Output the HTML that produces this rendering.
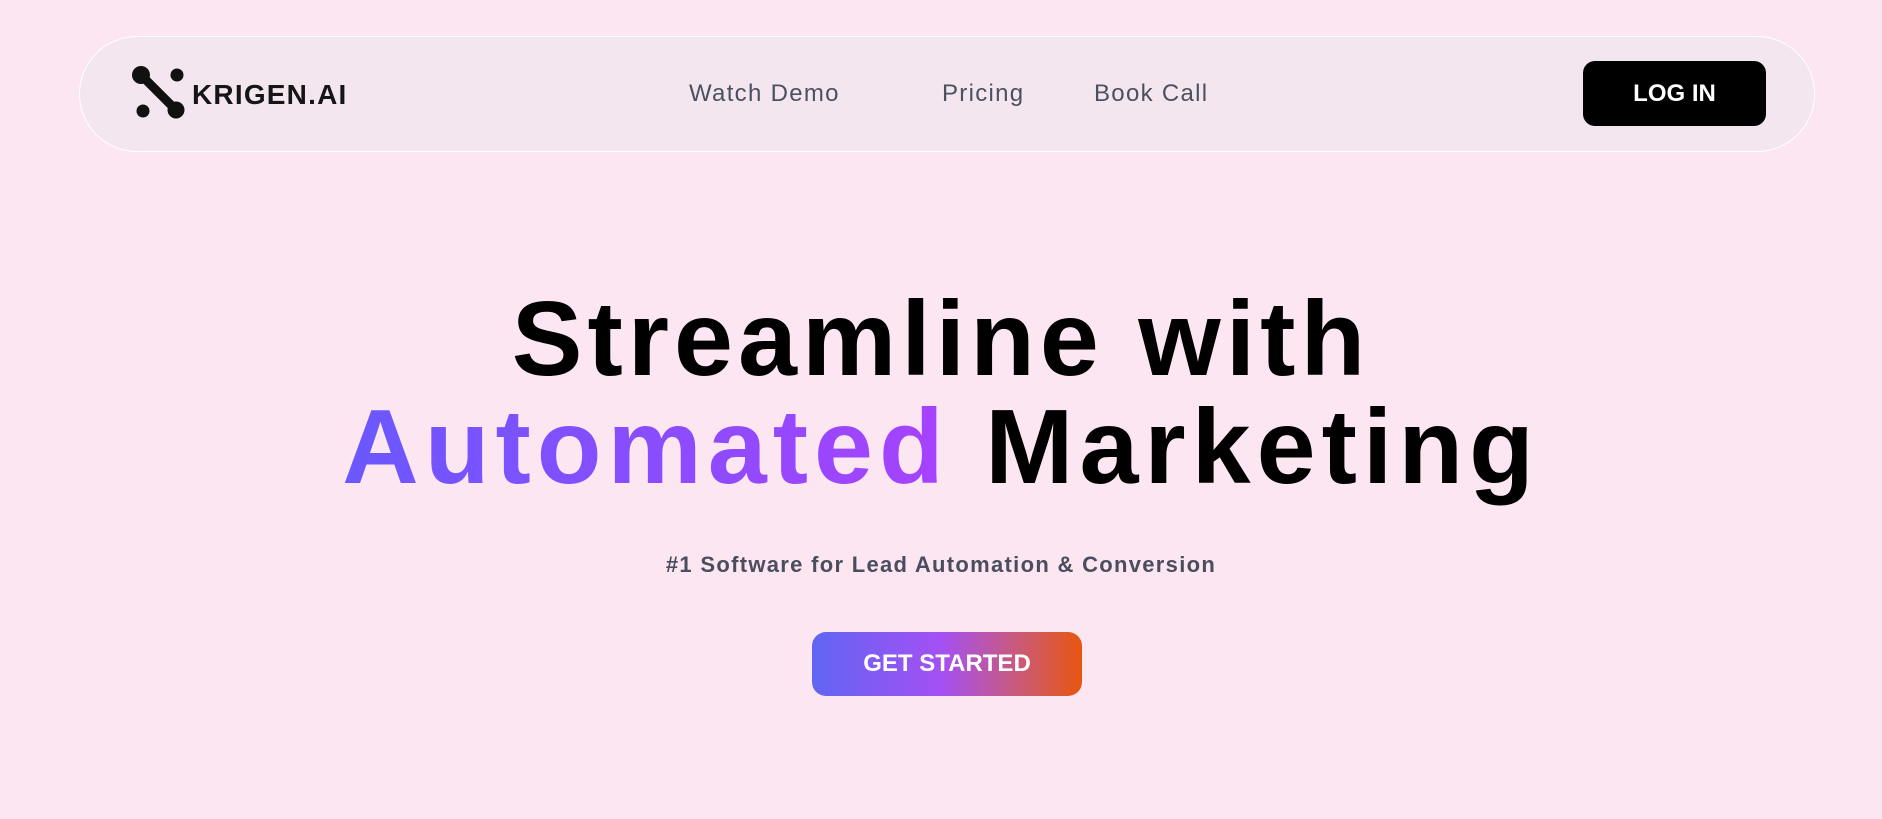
<!DOCTYPE html>
<html><head><meta charset="utf-8"><style>
html,body{margin:0;padding:0;width:1882px;height:819px;overflow:hidden;background:#fce6f2;font-family:"Liberation Sans",sans-serif;}
.nav{position:absolute;left:79px;top:36px;width:1736px;height:116px;border:1.5px solid #fff;border-radius:58px;background:#f3e6ee;box-sizing:border-box;}
.a{position:absolute;white-space:nowrap;}
.link{font-size:24px;color:#4b5060;letter-spacing:1.3px;top:80px;}
.login{left:1583px;top:61px;width:183px;height:65px;background:#000;border-radius:12px;color:#fff;font-weight:bold;font-size:24px;display:flex;align-items:center;justify-content:center;}
.h{left:0;width:1882px;text-align:center;font-weight:bold;font-size:106px;line-height:106px;letter-spacing:5px;color:#000;}
.g{background:linear-gradient(90deg,#6a58ff,#a742fe);-webkit-background-clip:text;background-clip:text;color:transparent;}
.sub{left:0;width:1882px;text-align:center;top:552px;font-size:22px;font-weight:bold;color:#4a4d5e;letter-spacing:1.3px;}
.btn{left:812px;top:632px;width:270px;height:64px;border-radius:14px;background:linear-gradient(90deg,#6165f3 0%,#a450f3 48%,#c85a7e 75%,#e8560f 100%);color:#fff;font-weight:bold;font-size:24px;display:flex;align-items:center;justify-content:center;}
</style></head><body>
<div class="nav"></div>
<svg class="a" style="left:131px;top:65px" width="56" height="56" viewBox="0 0 56 56">
<circle cx="10" cy="10" r="9" fill="#111"/>
<circle cx="46" cy="10" r="6.5" fill="#111"/>
<circle cx="12" cy="46" r="6.5" fill="#111"/>
<circle cx="45" cy="45" r="8.5" fill="#111"/>
<path d="M10 10 L45 45" stroke="#111" stroke-width="9" fill="none" stroke-linecap="round"/>
</svg>
<div class="a" style="left:192px;top:79px;font-size:28px;font-weight:bold;letter-spacing:1.2px;color:#151515;">KRIGEN.AI</div>
<div class="a link" style="left:689px;">Watch Demo</div>
<div class="a link" style="left:942px;">Pricing</div>
<div class="a link" style="left:1094px;">Book Call</div>
<div class="a login">LOG IN</div>
<div class="a h" style="top:286px;">Streamline with</div>
<div class="a h" style="top:394px;letter-spacing:6px;"><span class="g">Automated</span> Marketing</div>
<div class="a sub">#1 Software for Lead Automation &amp; Conversion</div>
<div class="a btn">GET STARTED</div>
</body></html>
